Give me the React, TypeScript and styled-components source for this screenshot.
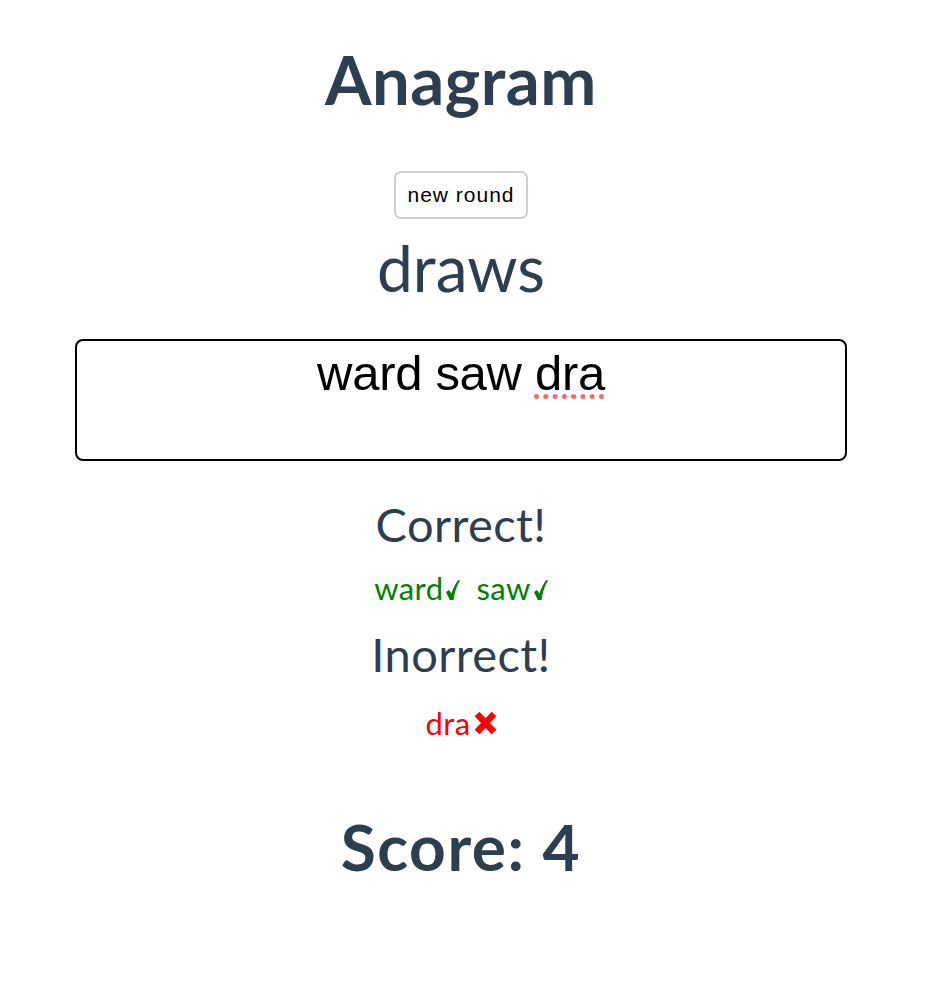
import { createGlobalStyle, styled } from "styled-components";

const GlobalStyle = createGlobalStyle`
  body {
    margin: 0;
    background: #fff;
  }
`;

const correct = ["ward", "saw"];
const incorrect = ["dra"];

function Check() {
  return (
    <CheckIcon viewBox="0 0 14 20" aria-hidden>
      <path
        d="M0 12 L3 10 L5.4 13.6 C7.2 8.4 9.4 3.6 12.2 0 L14 0.8 C11 5 8.8 11.6 7.6 20 L3.8 20 Z"
        fill="currentColor"
      />
    </CheckIcon>
  );
}

function Cross() {
  return (
    <CrossIcon viewBox="0 0 23 24" aria-hidden>
      <path d="M3 3 L20 21 M20 3 L3 21" stroke="currentColor" strokeWidth="6.5" />
    </CrossIcon>
  );
}

export default function App() {
  return (
    <>
      <GlobalStyle />
      <Wrapper>
        <Title>Anagram</Title>
        <RoundButton>new round</RoundButton>
        <Word>draws</Word>
        <Answer contentEditable suppressContentEditableWarning spellCheck={false}>
          ward saw <Misspelled>dra</Misspelled>
        </Answer>
        <Heading>Correct!</Heading>
        <Results $ok>
          {correct.map((w) => (
            <span key={w}>
              {w}
              <Check />
            </span>
          ))}
        </Results>
        <Heading $second>Inorrect!</Heading>
        <Results $second>
          {incorrect.map((w) => (
            <span key={w}>
              {w}
              <Cross />
            </span>
          ))}
        </Results>
        <Score>Score: 4</Score>
      </Wrapper>
    </>
  );
}

const Wrapper = styled.div`
  width: 922px;
  display: flex;
  flex-direction: column;
  align-items: center;
  font-family: Lato, "Noto Sans", sans-serif;
  color: #2c3e50;
  text-align: center;
  padding-top: 39px;
`;

const Title = styled.h1`
  margin: 0;
  font-size: 67px;
  font-weight: 700;
  line-height: 80px;
  letter-spacing: 0.5px;
`;

const RoundButton = styled.button`
  margin-top: 52px;
  height: 48px;
  padding: 0 11px;
  font-family: "Liberation Sans", Arial, sans-serif;
  font-size: 21px;
  letter-spacing: 1px;
  color: #000;
  background: #fff;
  border: 2px solid #cfcfcf;
  border-radius: 7px;
`;

const Word = styled.div`
  margin-top: 9px;
  font-size: 64px;
  line-height: 80px;
`;

const Answer = styled.div`
  margin: 31px 0 16px;
  width: 772px;
  height: 122px;
  box-sizing: border-box;
  border: 2px solid #000;
  border-radius: 8px;
  padding: 5px 10px;
  font-family: "Liberation Sans", Arial, sans-serif;
  font-size: 49px;
  line-height: 55px;
  letter-spacing: -0.3px;
  text-align: center;
  color: #000;
  outline: none;
`;

const Misspelled = styled.span`
  text-decoration: underline dotted #f26a6a;
  text-decoration-thickness: 5px;
  text-underline-offset: 4px;
`;

const Heading = styled.h2<{ $second?: boolean }>`
  margin: ${(p) => (p.$second ? "16px" : "17px")} 0 0;
  font-size: 47px;
  font-weight: 400;
  line-height: 60px;
  letter-spacing: 0.4px;
`;

const Results = styled.div<{ $ok?: boolean; $second?: boolean }>`
  margin-top: ${(p) => (p.$second ? "19px" : "14px")};
  display: flex;
  gap: 16px;
  font-size: 31px;
  line-height: 40px;
  letter-spacing: 0.4px;
  color: ${(p) => (p.$ok ? "green" : "red")};
`;

const CheckIcon = styled.svg`
  width: 14px;
  height: 20px;
  margin-left: 3px;
  vertical-align: baseline;
`;

const CrossIcon = styled.svg`
  width: 23px;
  height: 24px;
  margin-left: 3px;
  vertical-align: baseline;
`;

const Score = styled.h2`
  margin: 64px 0 0;
  font-size: 64px;
  font-weight: 700;
  line-height: 80px;
  letter-spacing: 1.5px;
`;
